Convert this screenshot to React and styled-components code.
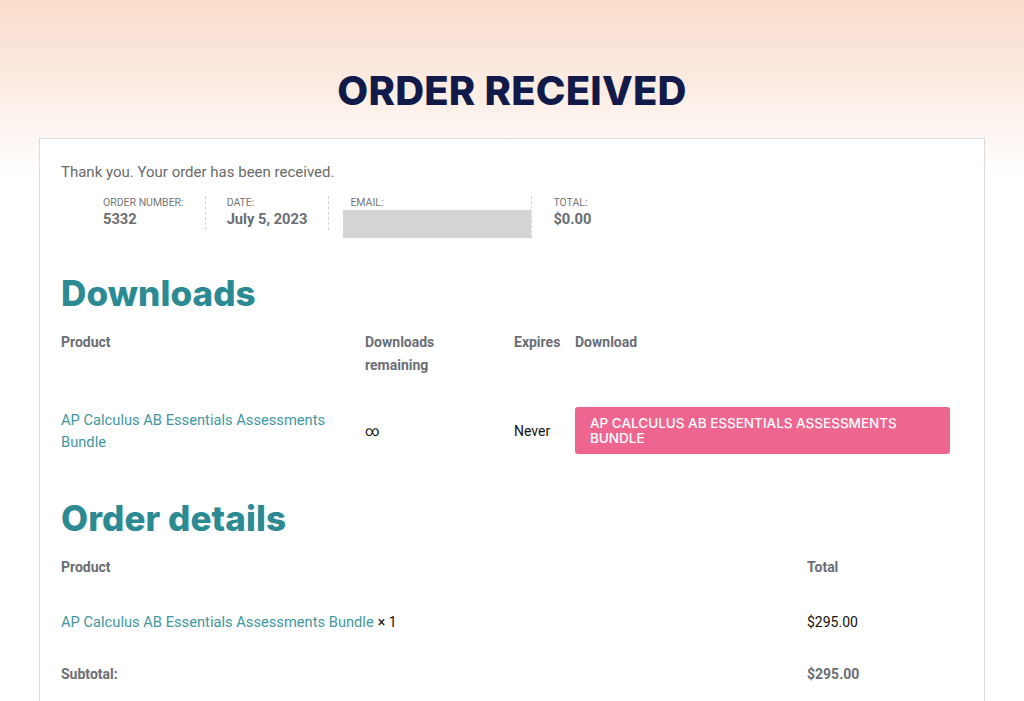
import React from 'react';
import styled, { createGlobalStyle } from 'styled-components';

const GlobalStyle = createGlobalStyle`
  html, body {
    margin: 0;
    padding: 0;
    background: #fff;
  }
  body {
    font-family: Roboto, "Liberation Sans", sans-serif;
  }
`;

const Page = styled.div`
  min-height: 701px;
  background: linear-gradient(180deg, #f9dccb 0px, #fbe9df 70px, #fdf5f0 130px, #ffffff 175px);
  overflow: hidden;
`;

const Hero = styled.header`
  height: 138px;
  display: flex;
  align-items: center;
  justify-content: center;
  padding-top: 44px;
  box-sizing: border-box;
`;

const PageTitle = styled.h1`
  margin: 0;
  font-family: Inter, "Noto Sans", sans-serif;
  font-weight: 800;
  font-size: 40px;
  letter-spacing: 0.2px;
  color: #111a49;
  line-height: 1;
`;

const Card = styled.main`
  margin: 0 39px;
  background: #fff;
  border: 1px solid #dcdcdc;
  border-bottom: none;
  padding: 22px 21px 40px;
  min-height: 600px;
  box-sizing: border-box;
`;

const Notice = styled.p`
  margin: 0;
  font-size: 15px;
  line-height: 22px;
  color: #6a6a6a;
`;

const Overview = styled.ul`
  list-style: none;
  margin: 13px 0 0;
  padding: 0 0 0 42px;
  display: flex;
  align-items: flex-start;
`;

const OverviewItem = styled.li`
  padding-right: ${(p) => (p.$last ? 0 : 21)}px;
  margin-right: ${(p) => (p.$last ? 0 : 21)}px;
  border-right: ${(p) => (p.$last ? 'none' : '1px dashed #d3d3d3')};
  min-height: 34px;
  width: ${(p) => (p.$width ? `${p.$width}px` : 'auto')};
`;

const Label = styled.span`
  display: block;
  font-size: 10.5px;
  line-height: 14px;
  text-transform: uppercase;
  color: #767676;
`;

const Value = styled.strong`
  display: block;
  font-size: 14.7px;
  line-height: 18px;
  font-weight: 700;
  color: #6b6e74;
`;

const Redacted = styled.div`
  width: 188px;
  height: 28px;
  margin: 0 0 0 -7px;
  background: #d4d4d4;
`;

const SectionTitle = styled.h2`
  margin: ${(p) => p.$top}px 0 0;
  font-family: Inter, "Noto Sans", sans-serif;
  font-weight: 800;
  font-size: 35px;
  line-height: 44px;
  letter-spacing: 0.1px;
  color: #2b8a92;
`;

const DownloadsGrid = styled.div`
  display: grid;
  grid-template-columns: 304px 149px 61px 1fr;
  margin-top: 16px;
`;

const OrderGrid = styled.div`
  display: grid;
  grid-template-columns: 746px 1fr;
  margin-top: 16px;
`;

const HeadCell = styled.div`
  font-size: 14px;
  font-weight: 700;
  line-height: 23px;
  color: #6b6e75;
  padding-bottom: ${(p) => p.$pb || 0}px;
`;

const Cell = styled.div`
  display: flex;
  align-items: center;
  font-size: 14px;
  line-height: 22px;
  color: #111;
  min-height: ${(p) => p.$h || 0}px;
  padding-right: ${(p) => p.$pr || 0}px;
`;

const ProductLink = styled.a`
  color: #3f97a0;
  text-decoration: none;
  font-size: 14.7px;
`;

const Qty = styled.span`
  margin-left: 4px;
  color: #111;
`;

const DownloadButton = styled.a`
  display: block;
  width: 100%;
  box-sizing: border-box;
  padding: 9px 15px 8px;
  background: #ee6590;
  border-radius: 3px;
  color: #fff;
  font-family: Inter, "Noto Sans", sans-serif;
  font-weight: 500;
  font-size: 13.5px;
  line-height: 15px;
  text-transform: uppercase;
  text-decoration: none;
`;

const SubtotalLabel = styled(HeadCell)`
  padding-top: 30px;
`;

const App = () => {
  const product = 'AP Calculus AB Essentials Assessments Bundle';

  return (
    <>
      <GlobalStyle />
      <Page>
        <Hero>
          <PageTitle>ORDER RECEIVED</PageTitle>
        </Hero>

        <Card>
          <Notice>Thank you. Your order has been received.</Notice>

          <Overview>
            <OverviewItem>
              <Label>Order number:</Label>
              <Value>5332</Value>
            </OverviewItem>
            <OverviewItem>
              <Label>Date:</Label>
              <Value>July 5, 2023</Value>
            </OverviewItem>
            <OverviewItem $width={160}>
              <Label>Email:</Label>
              <Redacted />
            </OverviewItem>
            <OverviewItem $last>
              <Label>Total:</Label>
              <Value>$0.00</Value>
            </OverviewItem>
          </Overview>

          <SectionTitle $top={33}>Downloads</SectionTitle>

          <DownloadsGrid>
            <HeadCell $pb={30}>Product</HeadCell>
            <HeadCell $pb={30}>Downloads<br />remaining</HeadCell>
            <HeadCell $pb={30}>Expires</HeadCell>
            <HeadCell $pb={30}>Download</HeadCell>

            <Cell $h={47} $pr={30}>
              <ProductLink href="#">{product}</ProductLink>
            </Cell>
            <Cell $h={47}>∞</Cell>
            <Cell $h={47}>Never</Cell>
            <Cell $h={47} $pr={13}>
              <DownloadButton href="#">{product}</DownloadButton>
            </Cell>
          </DownloadsGrid>

          <SectionTitle $top={42}>Order details</SectionTitle>

          <OrderGrid>
            <HeadCell $pb={32}>Product</HeadCell>
            <HeadCell $pb={32}>Total</HeadCell>

            <Cell>
              <ProductLink href="#">{product}</ProductLink>
              <Qty>× 1</Qty>
            </Cell>
            <Cell>$295.00</Cell>

            <SubtotalLabel>Subtotal:</SubtotalLabel>
            <SubtotalLabel>$295.00</SubtotalLabel>
          </OrderGrid>
        </Card>
      </Page>
    </>
  );
};

export default App;
